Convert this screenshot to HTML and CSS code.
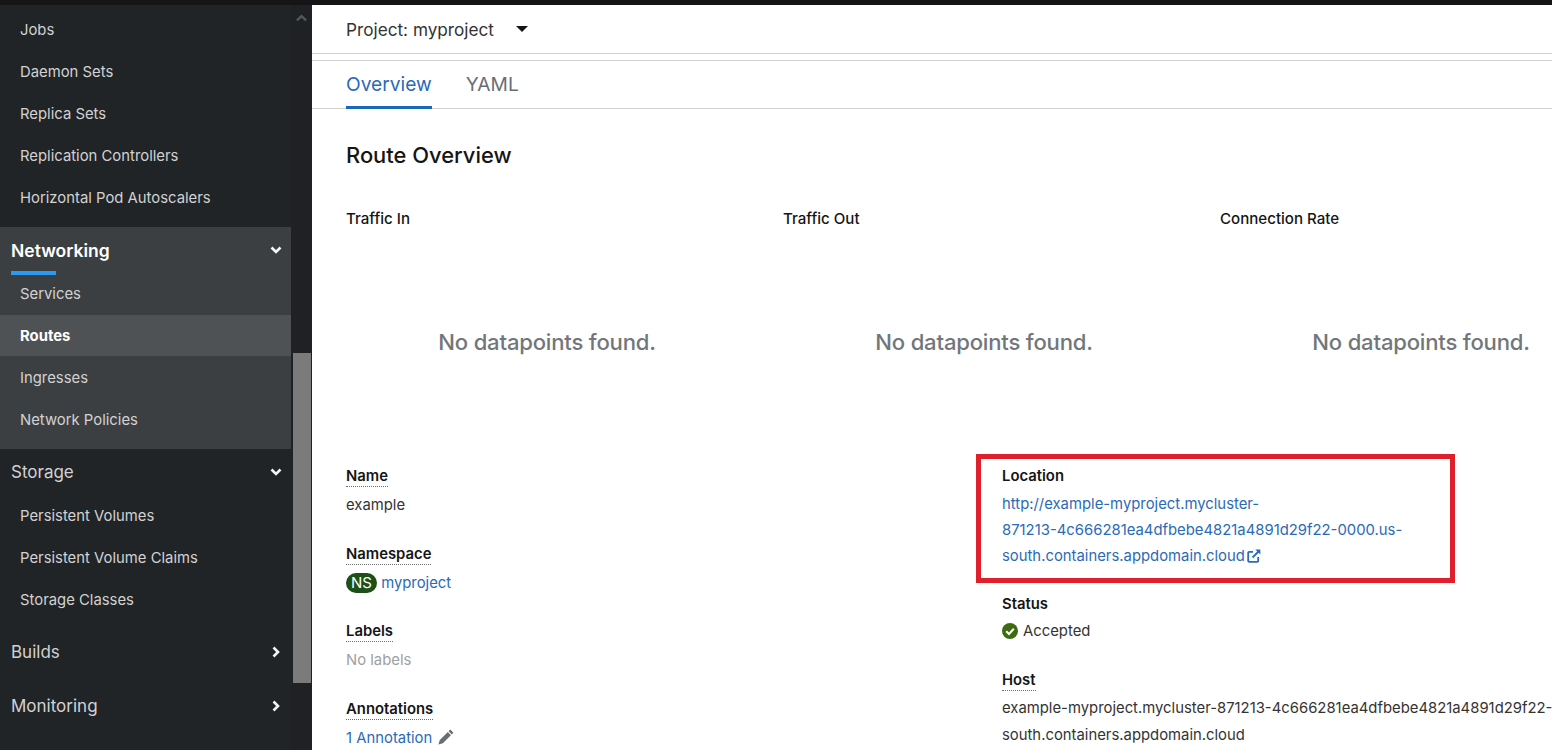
FILE: index.html
```html
<!DOCTYPE html>
<html lang="en">
<head>
    <meta charset="UTF-8">
    <title>Route Overview</title>
    <link rel="stylesheet" href="styles.css">
</head>
<body>
    <div class="topbar"></div>
    <div class="page">
        <aside class="sidebar">
            <nav class="nav">
                <a class="nav-item">Jobs</a>
                <a class="nav-item">Daemon Sets</a>
                <a class="nav-item">Replica Sets</a>
                <a class="nav-item">Replication Controllers</a>
                <a class="nav-item">Horizontal Pod Autoscalers</a>

                <div class="nav-group nav-group-open">
                    <div class="nav-title nav-title-active">
                        <span class="nav-title-text">Networking</span>
                        <svg class="chev" viewBox="0 0 12 12"><path d="M1.5 3.5 6 8l4.5-4.5"/></svg>
                    </div>
                    <a class="nav-item">Services</a>
                    <a class="nav-item nav-item-current">Routes</a>
                    <a class="nav-item">Ingresses</a>
                    <a class="nav-item">Network Policies</a>
                </div>

                <div class="nav-group nav-group-storage">
                    <div class="nav-title">
                        <span class="nav-title-text">Storage</span>
                        <svg class="chev" viewBox="0 0 12 12"><path d="M1.5 3.5 6 8l4.5-4.5"/></svg>
                    </div>
                    <a class="nav-item">Persistent Volumes</a>
                    <a class="nav-item">Persistent Volume Claims</a>
                    <a class="nav-item">Storage Classes</a>
                </div>

                <div class="nav-title nav-title-closed">
                    <span class="nav-title-text">Builds</span>
                    <svg class="chev" viewBox="0 0 12 12"><path d="M3.5 1.5 8 6l-4.5 4.5"/></svg>
                </div>
                <div class="nav-title nav-title-closed">
                    <span class="nav-title-text">Monitoring</span>
                    <svg class="chev" viewBox="0 0 12 12"><path d="M3.5 1.5 8 6l-4.5 4.5"/></svg>
                </div>
            </nav>
            <div class="scrollbar">
                <svg class="scroll-up" viewBox="0 0 12 8"><path d="M1 6.5 6 2l5 4.5"/></svg>
                <div class="scroll-thumb"></div>
            </div>
        </aside>

        <main class="main">
            <div class="project-bar">
                <span>Project: myproject</span>
                <span class="caret"></span>
            </div>
            <div class="tabs">
                <a class="tab tab-active">Overview</a>
                <a class="tab">YAML</a>
            </div>
            <section class="content">
                <h1 class="heading">Route Overview</h1>
                <div class="charts">
                    <div class="chart">
                        <h2 class="chart-title">Traffic In</h2>
                        <p class="chart-empty">No datapoints found.</p>
                    </div>
                    <div class="chart">
                        <h2 class="chart-title">Traffic Out</h2>
                        <p class="chart-empty">No datapoints found.</p>
                    </div>
                    <div class="chart chart-last">
                        <h2 class="chart-title">Connection Rate</h2>
                        <p class="chart-empty">No datapoints found.</p>
                    </div>
                </div>
                <div class="details">
                    <dl class="details-col">
                        <dt class="term"><span class="dotted">Name</span></dt>
                        <dd class="desc">example</dd>
                        <dt class="term"><span class="dotted">Namespace</span></dt>
                        <dd class="desc"><span class="badge">NS</span> <a class="link">myproject</a></dd>
                        <dt class="term"><span class="dotted">Labels</span></dt>
                        <dd class="desc desc-muted">No labels</dd>
                        <dt class="term"><span class="dotted">Annotations</span></dt>
                        <dd class="desc">
                            <a class="link">1 Annotation</a>
                            <svg class="pencil" viewBox="0 0 16 16"><path d="M12.3 0.6 15.4 3.7 13.7 5.4 10.6 2.3ZM9.8 3.1 12.9 6.2 4.9 14.2 0.4 15.6 1.8 11.1Z"/></svg>
                        </dd>
                    </dl>
                    <dl class="details-col details-right">
                        <div class="callout"></div>
                        <dt class="term">Location</dt>
                        <dd class="desc desc-location">
                            <a class="link">http://example-myproject.mycluster-<br>871213-4c666281ea4dfbebe4821a4891d29f22-0000.us-<br>south.containers.appdomain.cloud</a>
                            <svg class="external" viewBox="0 0 14 14"><path class="external-box" d="M6 2.8H2.2a1 1 0 0 0-1 1v8a1 1 0 0 0 1 1h8a1 1 0 0 0 1-1V8"/><path class="external-arrow" d="M5.5 8.5 12 2"/><path class="external-head" d="M8.4 .6h5v5z"/></svg>
                        </dd>
                        <dt class="term">Status</dt>
                        <dd class="desc desc-status">
                            <svg class="check" viewBox="0 0 16 16"><circle cx="8" cy="8" r="8"/><path d="M4.2 8.2 7 11l4.8-5.2"/></svg>
                            Accepted
                        </dd>
                        <dt class="term"><span class="dotted">Host</span></dt>
                        <dd class="desc desc-host">example-myproject.mycluster-871213-4c666281ea4dfbebe4821a4891d29f22-<br>south.containers.appdomain.cloud</dd>
                    </dl>
                </div>
            </section>
        </main>
    </div>
</body>
</html>
```

FILE: styles.css
```css
html, body { margin: 0; height: 100%; overflow: hidden; }
body { font-family: Inter, "Noto Sans", Arial, sans-serif; font-size: 14.85px; color: #151515; background: #fff; }
a { text-decoration: none; }

.topbar { height: 5px; background: #151515; }
.page { display: flex; height: 745px; }

/* sidebar */
.sidebar { width: 312px; flex: none; display: flex; background: #212427; overflow: hidden; }
.nav { width: 291px; flex: none; padding-top: 3px; }
.nav-item { display: block; height: 42px; line-height: 44px; padding-left: 20px; color: #d2d2d2; }
.nav-item-current { background: #4f5255; color: #fff; font-weight: 700; height: 41px; line-height: 42px; margin-top: 1px; }
.nav-group-open { background: #3c3f42; margin-top: 9px; height: 222px; }
.nav-group-storage { height: 175px; }
.nav-title { height: 45px; padding: 0 9px 0 11px; box-sizing: border-box; display: flex; align-items: center; justify-content: space-between; font-size: 17px; color: #d2d2d2; }
.nav-title-active { color: #fff; font-size: 17.5px; font-weight: 600; padding-top: 1px; }
.nav-title-active .nav-title-text { position: relative; }
.nav-title-active .nav-title-text::after { content: ""; position: absolute; left: 0; top: 31px; width: 45px; height: 4px; background: #2b9af3; }
.nav-title-closed { height: 54px; padding-top: 2px; }
.chev { width: 12px; height: 12px; fill: none; stroke: #fff; stroke-width: 2.6; opacity: .95; }

.scrollbar { flex: 1; position: relative; background: #1f2124; }
.scroll-up { position: absolute; left: 5px; top: 9px; width: 11px; height: 8px; fill: none; stroke: #55585b; stroke-width: 2.6; }
.scroll-thumb { position: absolute; left: 2px; right: 1px; top: 348px; height: 330px; background: #7b7b7b; }

/* main */
.main { flex: 1; min-width: 0; overflow: hidden; }
.project-bar { height: 49px; padding-left: 34px; box-sizing: border-box; display: flex; align-items: center; gap: 22px; font-size: 17.2px; border-bottom: 1px solid #d2d2d2; color: #333; }
.caret { width: 0; height: 0; border-left: 6px solid transparent; border-right: 6px solid transparent; border-top: 6px solid #151515; }
.tabs { margin-top: 6px; height: 49px; box-sizing: border-box; border-top: 1px solid #d2d2d2; border-bottom: 1px solid #d2d2d2; padding-left: 34px; display: flex; gap: 34px; }
.tab { font-size: 19.2px; line-height: 47px; color: #6a6e73; height: 48px; box-sizing: border-box; }
.tab-active { border-bottom: 3px solid #1a68bd; color: #2a6ab8; }

.content { padding: 30px 0 0 34px; }
.heading { margin: 0; font-size: 21.9px; font-weight: 500; line-height: 32px; color: #151515; }
.charts { display: flex; margin-top: 38px; height: 255px; gap: 35px; }
.chart { width: 402px; flex: none; }
/* the last chart carries on under the window edge, its centred text stays in view */
.chart-last { width: 332px; }
.chart-last .chart-empty { margin-right: -70px; }
.chart-title { margin: 0; font-size: 15.1px; font-weight: 500; line-height: 20px; }
.chart-empty { margin: 97px 0 0; text-align: center; font-size: 22.1px; font-weight: 500; letter-spacing: -.2px; color: #72767b; line-height: 32px; }

.details { display: flex; }
.details-col { margin: 0; width: 656px; flex: none; }
.details-right { position: relative; white-space: nowrap; width: 550px; }
.term { font-weight: 600; line-height: 22px; padding-top: 1px; color: #151515; }
.dotted { border-bottom: 1px dotted #6a6e73; padding-bottom: 1px; }
.desc { margin: 0 0 23.5px; line-height: 26px; padding-top: 5px; height: 26px; color: #333; }
.desc-muted { color: #a0a0a0; }
.link { color: #2a6ab8; }
.badge { display: inline-block; background: #1e4f18; color: #fff; border-radius: 10px; padding: 0 5px; line-height: 20px; font-size: 15px; }
.pencil { width: 16px; height: 16px; fill: #6a6e73; vertical-align: -2px; margin-left: 2px; }

.callout { position: absolute; left: -26px; top: -10px; width: 479px; height: 129px; box-sizing: border-box; border: 5px solid #e01f2c; }
.desc-location { height: auto; padding-top: 4px; margin-bottom: 23px; }
.external { width: 14px; height: 14px; vertical-align: -2px; margin-left: -2px; fill: none; stroke: #2a6ab8; stroke-width: 1.8; }
.external-head { fill: #2a6ab8; stroke: none; }
.desc-status { display: flex; align-items: center; gap: 5px; padding-top: 3px; margin-bottom: 24px; }
.check { width: 16px; height: 16px; }
.check circle { fill: #3e6b12; }
.check path { fill: none; stroke: #fff; stroke-width: 2; }
.desc-host { height: auto; padding-top: 4px; line-height: 27px; }
```
